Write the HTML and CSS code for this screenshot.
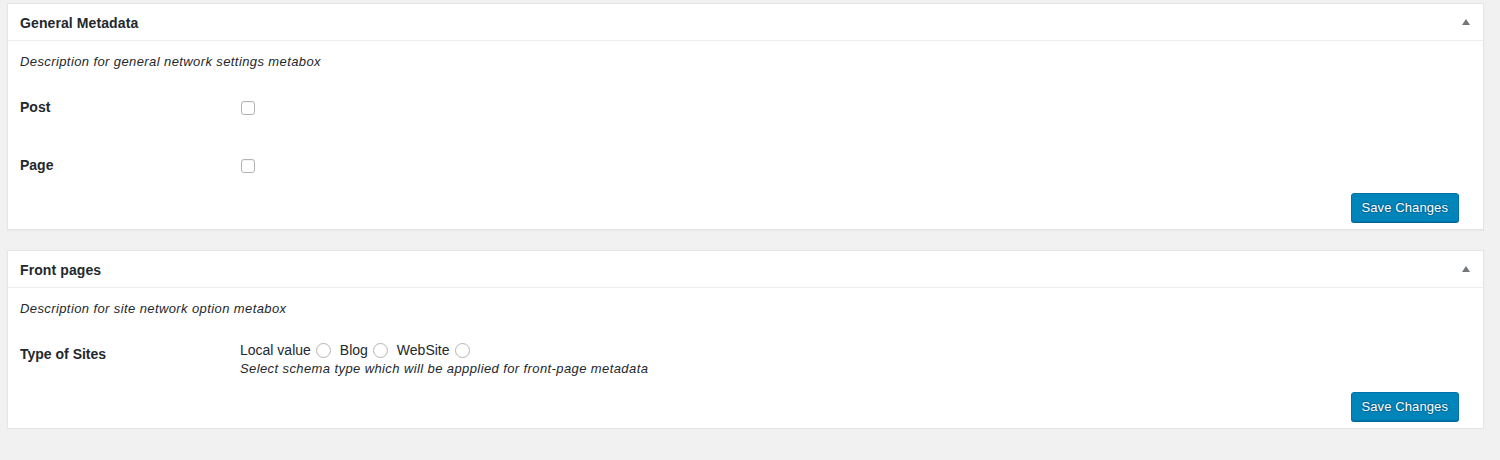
FILE: index.html
```html
<!DOCTYPE html>
<html>
<head>
<meta charset="utf-8">
<link rel="stylesheet" href="styles.css">
</head>
<body>
<div class="wrap">
  <div class="postbox">
    <div class="postbox-header">
      <h2 class="hndle">General Metadata</h2>
      <span class="toggle"></span>
    </div>
    <div class="inside">
      <p class="desc">Description for general network settings metabox</p>
      <div class="rows">
        <div class="row">
          <div class="th">Post</div>
          <div class="td"><span class="checkbox"></span></div>
        </div>
        <div class="row">
          <div class="th">Page</div>
          <div class="td"><span class="checkbox"></span></div>
        </div>
      </div>
      <div class="actions"><button class="button-primary">Save Changes</button></div>
    </div>
  </div>

  <div class="postbox">
    <div class="postbox-header">
      <h2 class="hndle">Front pages</h2>
      <span class="toggle"></span>
    </div>
    <div class="inside">
      <p class="desc">Description for site network option metabox</p>
      <div class="rows rows-2">
        <div class="row row-top">
          <div class="th th-top">Type of Sites</div>
          <div class="td td-col">
            <div class="radios">
              <span class="opt">Local value<span class="radio"></span></span>
              <span class="opt">Blog<span class="radio"></span></span>
              <span class="opt">WebSite<span class="radio"></span></span>
            </div>
            <p class="help">Select schema type which will be appplied for front-page metadata</p>
          </div>
        </div>
      </div>
      <div class="actions actions-2"><button class="button-primary">Save Changes</button></div>
    </div>
  </div>
</div>
</body>
</html>
```

FILE: styles.css
```css
html, body {
  margin: 0;
  padding: 0;
  background: #f1f1f1;
  font-family: "Liberation Sans", Arial, sans-serif;
  font-size: 13px;
  color: #23282d;
}
.wrap {
  padding: 3px 16px 0 7px;
  display: flex;
  flex-direction: column;
  gap: 20px;
}
.postbox {
  background: #fff;
  border: 1px solid #e5e5e5;
  box-shadow: 0 1px 1px rgba(0,0,0,0.04);
}
.postbox-header {
  height: 36px;
  border-bottom: 1px solid #eee;
  display: flex;
  align-items: center;
  justify-content: space-between;
  padding: 0 13px 0 12px;
}
.hndle {
  margin: 0;
  font-size: 14px;
  font-weight: 700;
  line-height: 20px;
  letter-spacing: 0.1px;
  color: #23282d;
  padding-top: 1px;
}
.toggle {
  width: 0;
  height: 0;
  border-left: 4px solid transparent;
  border-right: 4px solid transparent;
  border-bottom: 6px solid #72777c;
  margin-top: -1px;
}
.inside {
  padding: 11px 12px 7px 12px;
}
.desc {
  margin: 0;
  font-style: italic;
  line-height: 20px;
  letter-spacing: 0.4px;
  color: #23282d;
}
.rows {
  margin-top: 16px;
  display: flex;
  flex-direction: column;
  gap: 20px;
}
.rows-2 {
  margin-top: 21px;
}
.row {
  display: flex;
  align-items: center;
  height: 38px;
}
.row-top {
  align-items: flex-start;
  height: auto;
}
.th {
  width: 220px;
  flex: none;
  font-size: 14px;
  font-weight: 700;
  line-height: 20px;
  color: #23282d;
}
.th-top {
  padding-top: 4px;
}
.td {
  display: flex;
  align-items: center;
}
.td-col {
  flex-direction: column;
  align-items: flex-start;
}
.checkbox {
  display: block;
  width: 12px;
  height: 12px;
  margin-left: 1px;
  margin-top: 2px;
  border: 1px solid #b4b4b4;
  border-radius: 3px;
  background: #fff;
  box-shadow: inset 0 1px 1px rgba(0,0,0,0.05);
}
.radios {
  display: flex;
  align-items: center;
  height: 20px;
  font-size: 14px;
  color: #23282d;
}
.opt {
  display: flex;
  align-items: center;
  margin-right: 9px;
}
.radio {
  display: block;
  width: 13px;
  height: 13px;
  margin-left: 5px;
  border: 1px solid #b4b4b4;
  border-radius: 50%;
  background: #fff;
}
.help {
  margin: 0;
  font-style: italic;
  line-height: 18px;
  letter-spacing: 0.4px;
  color: #23282d;
}
.actions {
  margin-top: 9px;
  display: flex;
  justify-content: flex-end;
  padding-right: 12px;
}
.actions-2 {
  margin-top: 14px;
}
.button-primary {
  height: 29px;
  padding: 0 10px;
  font-family: "Liberation Sans", Arial, sans-serif;
  font-size: 13px;
  line-height: 26px;
  letter-spacing: 0.1px;
  color: #fff;
  background: #0085ba;
  border: 1px solid #0073aa;
  border-radius: 3px;
  box-shadow: 0 1px 0 #006799;
  text-shadow: 0 -1px 1px #006799, 1px 0 1px #006799, 0 1px 1px #006799, -1px 0 1px #006799;
  cursor: pointer;
}
```
